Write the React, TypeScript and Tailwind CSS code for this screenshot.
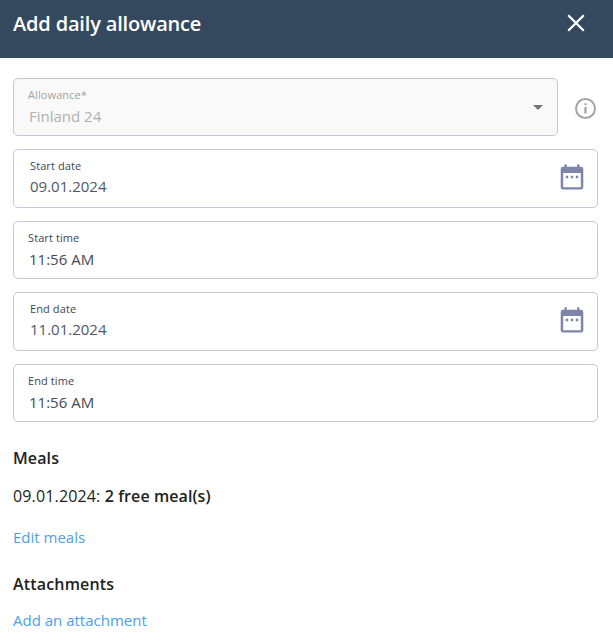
import type { ReactNode } from "react";

function CalendarIcon() {
  return (
    <svg width="24" height="27" viewBox="0 0 24 27" fill="#7d86a8" aria-hidden>
      <path d="M4.5 0.3h2.3v4h-2.3zM17.1 0.3h2.3v4h-2.3z" />
      <path
        fillRule="evenodd"
        d="M3 2.7h18a2.3 2.3 0 0 1 2.3 2.3v18.3A2.3 2.3 0 0 1 21 25.6H3a2.3 2.3 0 0 1-2.3-2.3V5A2.3 2.3 0 0 1 3 2.7zM3.2 9v14.2h17.6V9z"
      />
      <path d="M5.8 11.8h2.4v2.4H5.8zM10.8 11.8h2.4v2.4h-2.4zM15.8 11.8h2.4v2.4h-2.4z" />
    </svg>
  );
}

function CloseIcon() {
  return (
    <svg width="18" height="18" viewBox="0 0 18 18" aria-hidden>
      <path d="M1.2 1.2l15.6 15.6M16.8 1.2L1.2 16.8" stroke="#fff" strokeWidth="2.3" />
    </svg>
  );
}

function InfoIcon() {
  return (
    <svg width="22" height="22" viewBox="0 0 22 22" fill="none" aria-hidden>
      <circle cx="10.5" cy="10.5" r="9.5" stroke="#a3a3a3" strokeWidth="2" />
      <path d="M9.4 5.2h2.2v2H9.4zM9.4 9.1h2.2v6.4H9.4z" fill="#a3a3a3" />
    </svg>
  );
}

function DateField({ label, value }: { label: string; value: string }) {
  return (
    <div className="flex h-[59px] items-start justify-between rounded-[5px] border border-[#c1c9d6] pr-[13px] pl-4">
      <div className="pt-2">
        <div className="text-[11px] leading-4 tracking-[0.1px] text-[#3d4756]">{label}</div>
        <div className="text-[15px] leading-6 text-[#50566a]">{value}</div>
      </div>
      <div className="pt-3.5">
        <CalendarIcon />
      </div>
    </div>
  );
}

function TimeField({ label, value }: { label: string; value: string }) {
  return (
    <div className="h-[58px] rounded-[5px] border border-[#c1c9d6] pt-2 pl-3.5">
      <div className="text-[11px] leading-4 tracking-[0.1px] text-[#3d4756]">{label}</div>
      <div className="pt-px pl-px text-[15px] leading-6 text-[#454b57]">{value}</div>
    </div>
  );
}

function Link({ children }: { children: ReactNode }) {
  return (
    <a href="#" className="text-[15px] leading-6 text-[#4ba0f2]">
      {children}
    </a>
  );
}

export default function App() {
  return (
    <div className="h-[644px] w-[613px] overflow-hidden bg-white font-['Open_Sans',sans-serif]">
      <header className="flex h-[58px] items-start justify-between bg-[#35495e] pr-7 pl-[13px]">
        <h1 className="pt-2.5 text-xl leading-7 font-[560] tracking-[-0.17px] text-white">Add daily allowance</h1>
        <button type="button" aria-label="Close" className="pt-3.5">
          <CloseIcon />
        </button>
      </header>

      <form className="flex flex-col gap-[13px] pt-5 pr-[15px] pl-[13px]">
        <div className="flex items-center gap-[17px]">
          <div className="flex h-[58px] w-[545px] items-start justify-between rounded-[5px] border border-[#c1c9d6] bg-[#f9f9f9] pr-3.5 pl-3.5">
            <div className="pt-2">
              <div className="text-[11px] leading-4 tracking-[0.1px] text-[#a3a3a3]">Allowance*</div>
              <div className="pt-px pl-px text-[15px] leading-6 text-[#b0b0b0]">Finland 24</div>
            </div>
            <svg width="10" height="5" viewBox="0 0 10 5" className="mt-[26px]" aria-hidden>
              <path d="M0 0h10L5 5z" fill="#747477" />
            </svg>
          </div>
          <div className="pt-1">
            <InfoIcon />
          </div>
        </div>
        <DateField label="Start date" value="09.01.2024" />
        <TimeField label="Start time" value="11:56 AM" />
        <DateField label="End date" value="11.01.2024" />
        <TimeField label="End time" value="11:56 AM" />
      </form>

      <section className="flex flex-col items-start pt-6 pl-[13px] text-base leading-6 text-[#222]">
        <h2 className="font-[560] tracking-[0.12px]">Meals</h2>
        <p className="pt-3.5 pb-[17px] font-[370] tracking-[0.15px]">
          09.01.2024: <span className="font-[560] tracking-[0.08px]">2 free meal(s)</span>
        </p>
        <Link>Edit meals</Link>
        <h2 className="pt-[23px] pb-3 font-[560] tracking-[0.17px]">Attachments</h2>
        <Link>Add an attachment</Link>
      </section>
    </div>
  );
}
